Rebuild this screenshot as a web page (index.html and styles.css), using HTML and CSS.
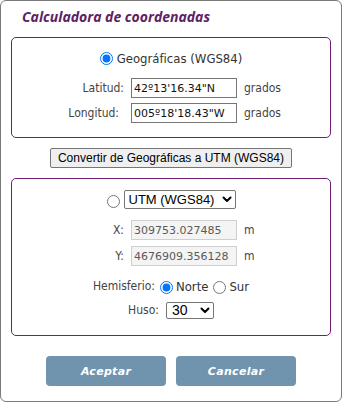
FILE: index.html
```html
<!DOCTYPE html>
<html lang="es">
	<head>
		<meta charset="utf-8">
		<title>Calculadora de coordenadas</title>
		<link rel="stylesheet" href="styles.css">
	</head>
	<body>
		<div class="dialog">
			<h1 class="dialog-title">Calculadora de coordenadas</h1>

			<div class="panel panel-geo">
				<label class="choice-row">
					<input type="radio" name="origen" checked>
					<span class="choice-text">Geográficas (WGS84)</span>
				</label>
				<div class="fields">
					<span class="field-label">Latitud:</span>
					<input class="field-input" type="text" value="42º13'16.34&quot;N">
					<span class="field-unit">grados</span>

					<span class="field-label field-label-shift">Longitud:</span>
					<input class="field-input" type="text" value="005º18'18.43&quot;W">
					<span class="field-unit">grados</span>
				</div>
			</div>

			<div class="convert-row">
				<button class="convert-button" type="button">Convertir de Geográficas a UTM (WGS84)</button>
			</div>

			<div class="panel panel-utm">
				<div class="choice-row">
					<input type="radio" name="origen">
					<span class="select-wrap select-datum">
						<select class="select">
							<option>UTM (WGS84)</option>
						</select>
						<svg class="select-arrow" width="10" height="7" viewBox="0 0 10 7">
							<polyline points="1.5,1.5 5,5 8.5,1.5"></polyline>
						</svg>
					</span>
				</div>
				<div class="fields fields-utm">
					<span class="field-label">X:</span>
					<input class="field-input" type="text" value="309753.027485" disabled>
					<span class="field-unit">m</span>

					<span class="field-label">Y:</span>
					<input class="field-input" type="text" value="4676909.356128" disabled>
					<span class="field-unit">m</span>
				</div>
				<div class="hemi-row">
					<span class="field-label">Hemisferio:</span>
					<label class="hemi-option"><input type="radio" name="hemi" checked><span class="hemi-text">Norte</span></label>
					<label class="hemi-option"><input type="radio" name="hemi"><span class="hemi-text">Sur</span></label>
				</div>
				<div class="huso-row">
					<span class="field-label">Huso:</span>
					<span class="select-wrap select-huso">
						<select class="select">
							<option>30</option>
						</select>
						<svg class="select-arrow" width="10" height="7" viewBox="0 0 10 7">
							<polyline points="1.5,1.5 5,5 8.5,1.5"></polyline>
						</svg>
					</span>
				</div>
			</div>

			<div class="actions">
				<button class="action-button" type="button">Aceptar</button>
				<button class="action-button" type="button">Cancelar</button>
			</div>
		</div>
	</body>
</html>
```

FILE: styles.css
```css
html, body {
	margin: 0;
	padding: 0;
	background: #ffffff;
}
.dialog {
	box-sizing: border-box;
	width: 342px;
	height: 402px;
	border: 1px solid #7a7a7a;
	border-radius: 6px;
	padding: 0 10px;
	font-family: "DejaVu Sans Condensed", "DejaVu Sans", sans-serif;
	font-stretch: condensed;
	color: #444444;
}
.dialog-title {
	margin: 0;
	padding: 7px 0 0 11px;
	height: 29px;
	box-sizing: border-box;
	font-family: "Open Sans", sans-serif;
	font-stretch: normal;
	font-style: italic;
	font-weight: 700;
	font-size: 14px;
	line-height: 18px;
	color: #5e2262;
}
.panel {
	border: 1px solid #701f74;
	border-radius: 5px;
	margin-top: 7px;
}
.panel-geo {
	padding: 11px 0 14px;
}
.panel-utm {
	margin-top: 10px;
	padding: 11px 0 16px;
}
.choice-row {
	display: flex;
	justify-content: center;
	align-items: center;
	height: 18px;
}
.choice-row input[type=radio] {
	margin: 0 4px 0 0;
	width: 13px;
	height: 13px;
}
.panel-utm .choice-row input[type=radio] {
	margin: 5px 4px 0 0;
}
.choice-text {
	font-size: 13px;
	color: #333333;
}
.fields {
	display: grid;
	grid-template-columns: 112px 106px auto;
	column-gap: 7px;
	row-gap: 5px;
	margin-top: 11px;
	align-items: center;
}
.fields-utm {
	margin-top: 12px;
	row-gap: 6px;
}
.field-label {
	font-size: 12px;
	text-align: right;
	color: #444444;
}
.field-label-shift {
	padding-right: 5px;
}
.field-input {
	box-sizing: border-box;
	width: 106px;
	height: 20px;
	margin: 0;
	padding: 1px 2px;
	border: 1px solid #767676;
	font-family: "DejaVu Sans", sans-serif;
	font-size: 11px;
	color: #111111;
	background: #ffffff;
}
.field-input:disabled {
	background: #f4f4f4;
	border-color: #cfcfcf;
	color: #5a5a5a;
}
.field-unit {
	font-size: 12px;
	color: #444444;
}
.convert-row {
	display: flex;
	justify-content: center;
	margin-top: 10px;
}
.convert-button {
	width: 242px;
	height: 20px;
	padding: 0;
	border: 1px solid #767676;
	border-radius: 2px;
	background: #efefef;
	font-family: "Liberation Sans", Arial, sans-serif;
	font-size: 12px;
	color: #000000;
}
.select-wrap {
	position: relative;
	display: inline-block;
}
.select {
	appearance: none;
	-webkit-appearance: none;
	box-sizing: border-box;
	margin: 0;
	border: 1px solid #767676;
	border-radius: 2px;
	background: #ffffff;
	font-family: "Liberation Sans", Arial, sans-serif;
	color: #000000;
}
.select-datum .select {
	width: 112px;
	height: 19px;
	padding: 0 0 0 4px;
	font-size: 13px;
	line-height: 17px;
}
.select-huso .select {
	width: 48px;
	height: 17px;
	padding: 0 0 0 5px;
	font-size: 14px;
	line-height: 15px;
}
.select-arrow {
	position: absolute;
	right: 4px;
	top: 50%;
	margin-top: -3px;
	fill: none;
	stroke: #000000;
	stroke-width: 2;
	stroke-linecap: round;
	stroke-linejoin: round;
	pointer-events: none;
}
.hemi-row {
	display: flex;
	justify-content: center;
	align-items: center;
	margin-top: 11px;
	height: 18px;
}
.hemi-option {
	display: flex;
	align-items: center;
}
.hemi-option input[type=radio] {
	margin: 2px 3px 0 5px;
	width: 13px;
	height: 13px;
}
.hemi-text {
	font-size: 13px;
	color: #333333;
}
.huso-row {
	display: flex;
	justify-content: center;
	align-items: center;
	gap: 7px;
	margin-top: 5px;
	height: 19px;
}
.actions {
	display: flex;
	justify-content: center;
	gap: 10px;
	margin-top: 20px;
}
.action-button {
	width: 120px;
	height: 30px;
	border: none;
	border-radius: 4px;
	background: #7093ae;
	color: #ffffff;
	font-family: "DejaVu Sans", sans-serif;
	font-style: italic;
	font-weight: 700;
	font-size: 11px;
	letter-spacing: 0.3px;
}
```
